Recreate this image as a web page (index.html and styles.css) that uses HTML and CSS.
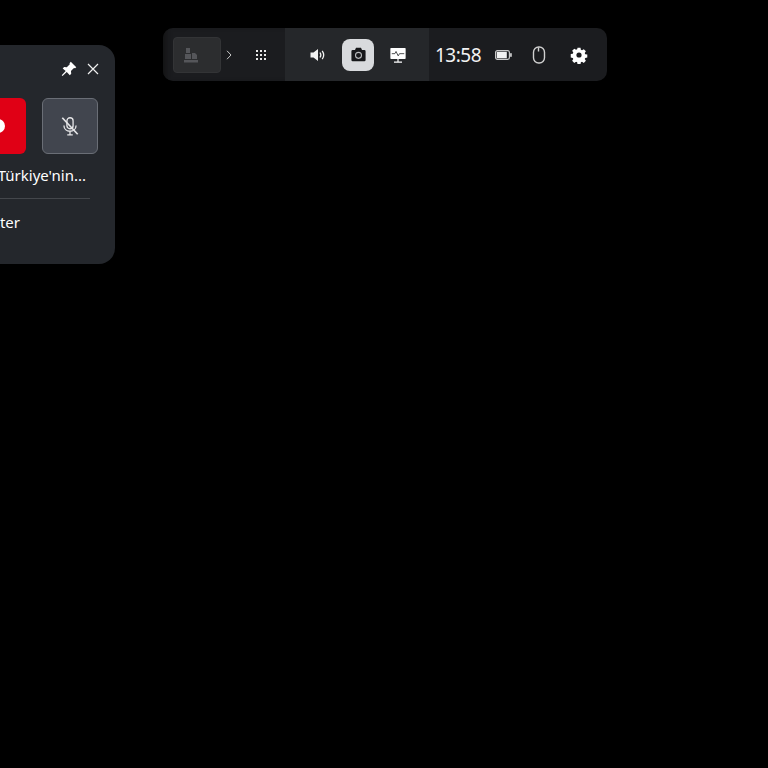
FILE: index.html
```html
<!DOCTYPE html>
<html lang="tr">
<head>
    <meta charset="UTF-8">
    <meta name="viewport" content="width=device-width, initial-scale=1.0">
    <title>Game Bar</title>
    <link rel="stylesheet" href="styles.css">
</head>
<body>
    <div class="panel">
        <div class="panel-head">
            <svg class="pin" width="16" height="16" viewBox="0 0 18 18"><path d="M11 .8l6.200 6.200-1.300 1.200-1.300-.3-3.400 3.400.3 3-1.600 1.600-3.400-3.400-4.800 4.500-.9-.9 4.500-4.800L1.900 8.400l1.600-1.600 3 .3 3.400-3.400-.3-1.300z" fill="#fff"/></svg>
            <svg class="close" width="14" height="14" viewBox="0 0 14 14"><path d="M2 2l10 10M12 2L2 12" stroke="#f0f0f0" stroke-width="1.200" fill="none"/></svg>
        </div>
        <div class="panel-buttons">
            <div class="btn-red"><span class="dot"></span></div>
            <div class="btn-mic">
                <svg width="22" height="22" viewBox="0 0 20 20" fill="none" stroke="#e6e6e8" stroke-width="1.200"><rect x="7.200" y="2.500" width="5.600" height="10" rx="2.800"/><path d="M4.500 9.500c0 7 11 7 11 0M10 15v3M7.500 18h5"/><path d="M3 2.500l14 15" stroke-width="1.500"/></svg>
            </div>
        </div>
        <div class="panel-title">Türkiye'nin...</div>
        <div class="panel-line"></div>
        <div class="panel-link">Twitter</div>
    </div>

    <div class="bar">
        <div class="bar-left">
            <div class="app-thumb">
                <svg width="14" height="16" viewBox="0 0 14 16" fill="#55565a"><path d="M2 1h4v5H2zM1 7h6v5H1zM8 6h3l2 2v4H8zM0 13h14v2.500H0z"/></svg>
            </div>
            <svg class="chevron" width="8" height="12" viewBox="0 0 8 12"><path d="M2 1.800L6 6 2 10.200" stroke="#c8c8c8" stroke-width="1" fill="none"/></svg>
            <div class="grid-icon">
                <i></i><i></i><i></i><i></i><i></i><i></i><i></i><i></i><i></i>
            </div>
        </div>
        <div class="bar-mid">
            <svg width="18" height="18" viewBox="0 0 18 18" fill="none"><path d="M1.500 6.500h3L9 3v12l-4.500-3.500h-3z" fill="#f2f2f2"/><path d="M11 6.500c1 1.500 1 3.500 0 5M13.200 4.800c1.800 2.500 1.800 5.900 0 8.400" stroke="#f2f2f2" stroke-width="1.300"/></svg>
            <div class="cam-btn">
                <svg width="15" height="15" viewBox="0 0 18 18"><path d="M6 1h6l1.200 2.500H16a1.500 1.500 0 0 1 1.500 1.500v10.500A1.500 1.500 0 0 1 16 17H2a1.500 1.500 0 0 1-1.500-1.500V5A1.500 1.500 0 0 1 2 3.500h2.800z" fill="#17181b"/><circle cx="9" cy="10" r="3.600" fill="none" stroke="#b8babd" stroke-width="1.300"/></svg>
            </div>
            <svg class="monitor" width="16" height="16" viewBox="0 0 18 18"><path d="M1.200 1h15.600a.8.8 0 0 1 .8.800v10.900a.8.8 0 0 1-.8.800H1.200a.8.8 0 0 1-.8-.8V1.800a.8.8 0 0 1 .8-.8z" fill="#fff"/><path d="M2 7.500h3.500l1.300-2.500 2.400 5 1.500-2.500h5.300" stroke="#25272a" stroke-width=".9" fill="none"/><path d="M9 13.500v3.500M4.500 17h9" stroke="#fff" stroke-width="1.300"/></svg>
        </div>
        <div class="bar-right">
            <span class="clock">13:58</span>
            <svg class="battery" width="17" height="10" viewBox="0 0 17 10"><rect x=".6" y=".6" width="13.800" height="8.800" rx="1.800" fill="none" stroke="#c8c8c8" stroke-width="1.200"/><rect x="1.800" y="1.800" width="10" height="6.400" fill="#f2f2f2"/><rect x="15.200" y="3.200" width="1.500" height="3.600" fill="#e8e8e8"/></svg>
            <svg class="mouse" width="14" height="18" viewBox="0 0 14 18" fill="none" stroke="#d0d0d0" stroke-width="1.400"><rect x="1.500" y="1" width="11" height="16" rx="5.200"/><path d="M6.500 1.500v4"/></svg>
            <svg class="gear" width="18" height="18" viewBox="0 0 18 18"><path d="M7.300.8h3.400l.4 2.300 1.300.6 2-1.300 2.400 2.400-1.300 2 .6 1.300 2.300.4v3.400l-2.300.4-.6 1.300 1.300 2-2.400 2.400-2-1.300-1.300.6-.4 2.300H7.300l-.4-2.300-1.300-.6-2 1.300-2.400-2.400 1.300-2-.6-1.300-2.300-.4V7.900l2.300-.4.6-1.300-1.300-2 2.400-2.400 2 1.300 1.300-.6z" transform="translate(1.100 1.100) scale(.88)" fill="#fff"/><circle cx="9" cy="9" r="2.600" fill="#1b1c1f"/></svg>
        </div>
    </div>
</body>
</html>
```

FILE: styles.css
```css
html, body {
    margin: 0;
    height: 100%;
    background: #000;
    overflow: hidden;
}

body {
    font-family: 'Noto Sans', 'Open Sans', sans-serif;
    color: #fff;
}

/* floating windows */
.panel {
    position: absolute;
    left: -245px;
    top: 45px;
    width: 360px;
    height: 219px;
    box-sizing: border-box;
    background: #24272c;
    border-radius: 16px;
    padding: 0 17px 0 0;
}

.panel-head {
    display: flex;
    justify-content: flex-end;
    align-items: center;
    gap: 9px;
    height: 48px;
    margin-right: -2px;
}

.panel-buttons {
    display: flex;
    justify-content: flex-end;
    gap: 16px;
    margin-top: 5px;
}

.btn-red {
    width: 56px;
    height: 56px;
    background: #e00015;
    border-radius: 6px;
    display: flex;
    align-items: center;
    justify-content: center;
}

.dot {
    width: 14px;
    height: 14px;
    border-radius: 50%;
    background: #fff;
}

.btn-mic {
    width: 54px;
    height: 54px;
    background: #41454e;
    border: 1px solid #6a6e76;
    border-radius: 6px;
    display: flex;
    align-items: center;
    justify-content: center;
}

.panel-title {
    font-size: 15px;
    line-height: 20px;
    margin-top: 11px;
    text-align: right;
    padding-right: 12px;
}

.panel-line {
    height: 1px;
    background: #44474c;
    margin: 13px 8px 0 0;
}

.panel-link {
    font-size: 15px;
    line-height: 20px;
    margin-top: 13px;
    text-align: right;
    margin-right: 78px;
}

.bar {
    position: absolute;
    left: 163px;
    top: 28px;
    width: 444px;
    height: 53px;
    display: flex;
    border-radius: 10px;
    overflow: hidden;
    background: #1b1c1f;
}

.bar-left {
    width: 122px;
    display: flex;
    align-items: center;
    padding-left: 10px;
    box-sizing: border-box;
    box-shadow: inset 6px 0 6px -4px #111;
}

.app-thumb {
    width: 48px;
    height: 36px;
    background: #2c2d2f;
    border: 1px solid #333436;
    border-radius: 4px;
    display: flex;
    align-items: center;
    padding-left: 10px;
    box-sizing: border-box;
}

.chevron {
    margin-left: 4px;
}

.grid-icon {
    display: grid;
    grid-template-columns: repeat(3, 2px);
    gap: 2px;
    margin-left: 23px;
}

.grid-icon i {
    width: 2px;
    height: 2px;
    background: #e8e8e8;
}

.bar-mid {
    width: 144px;
    background: #25272a;
    display: flex;
    align-items: center;
    padding-left: 24px;
    box-sizing: border-box;
}

.cam-btn {
    width: 32px;
    height: 32px;
    margin: 0 16px 0 15px;
    background: #d8dadd;
    border-radius: 8px;
    display: flex;
    align-items: center;
    justify-content: center;
}

.bar-right {
    flex: 1;
    display: flex;
    align-items: center;
    padding-left: 6px;
}

.clock {
    font-size: 19px;
    letter-spacing: -0.5px;
    color: #f2f2f2;
    width: 46px;
}

.battery {
    margin-left: 14px;
}

.mouse {
    margin-left: 20px;
}

.gear {
    margin-left: 24px;
}
```
